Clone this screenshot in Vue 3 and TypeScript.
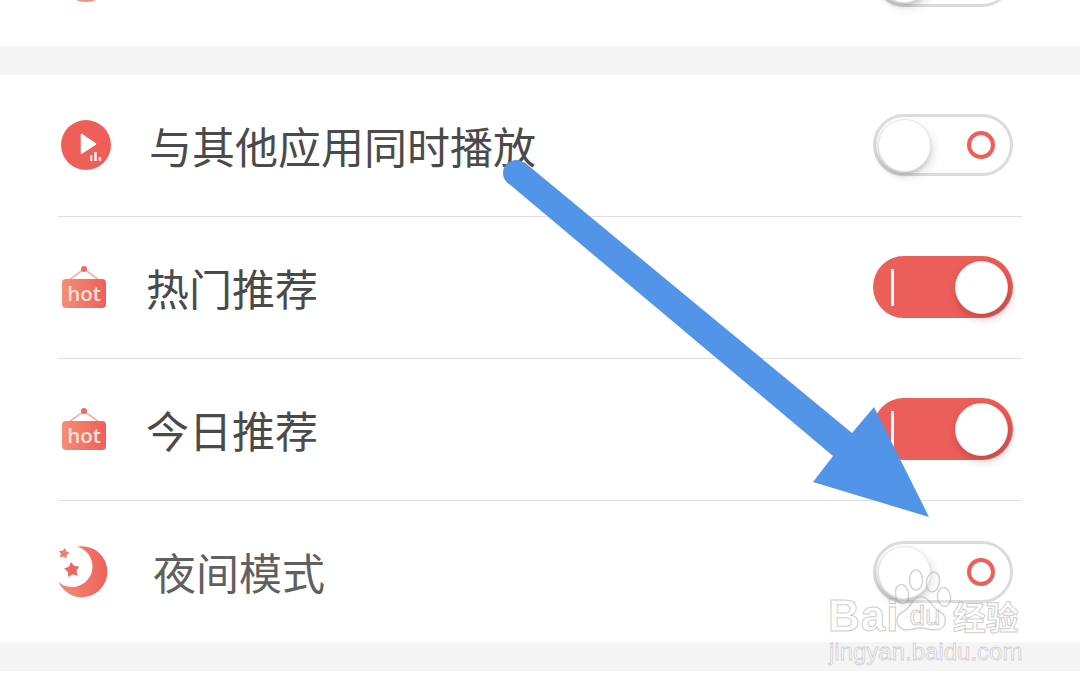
<script setup lang="ts">
function star(cx: number, cy: number, r: number, rot = 0): string {
  const pts: string[] = []
  for (let i = 0; i < 10; i++) {
    const rad = i % 2 === 0 ? r : r * 0.55
    const a = ((-90 + rot + i * 36) * Math.PI) / 180
    pts.push(`${(cx + rad * Math.cos(a)).toFixed(2)},${(cy + rad * Math.sin(a)).toFixed(2)}`)
  }
  return pts.join(' ')
}
const bigStar = star(15, 24, 8, -8)
const smallStar = star(7, 7.5, 5.6, 10)
</script>

<template>
  <div class="page">
    <section class="card card-top">
      <div class="peek-icon"></div>
      <div class="switch off peek-switch"><span class="knob"></span><span class="ring"></span></div>
    </section>
    <div class="band"></div>
    <section class="card">
      <div class="row">
        <svg class="icon play" width="52" height="52" viewBox="0 0 52 52">
          <circle cx="26" cy="26" r="25" fill="#ee5f5a" />
          <path d="M21.5 15.5 L35.5 25 L21.5 34 Z" fill="#fff" stroke="#fff" stroke-width="1.6" stroke-linejoin="round" />
          <rect x="30" y="36" width="2.4" height="6" fill="#fbdcda" />
          <rect x="34.3" y="33" width="2.4" height="9" fill="#fff" />
          <rect x="38.6" y="38" width="2.6" height="4" fill="#fbdcda" />
        </svg>
        <span class="label label-play">与其他应用同时播放</span>
        <div class="switch off"><span class="knob"></span><span class="ring"></span></div>
      </div>
      <div class="row">
        <svg class="icon hot" width="46" height="44" viewBox="0 0 46 44">
          <defs>
            <linearGradient id="hotA" x1="0" x2="1" y1="0" y2="0">
              <stop offset="0" stop-color="#f58d75" />
              <stop offset="1" stop-color="#ee605b" />
            </linearGradient>
          </defs>
          <path d="M8 15 L23 4 L38 15" fill="none" stroke="#f9b0a6" stroke-width="1.6" />
          <circle cx="23" cy="4" r="3" fill="#ef6a63" />
          <rect x="1" y="14" width="44" height="29" rx="4" fill="url(#hotA)" />
          <text x="23" y="35.5" class="hot-text">hot</text>
        </svg>
        <span class="label label-hot">热门推荐</span>
        <div class="switch on"><span class="bar"></span><span class="knob"></span></div>
      </div>
      <div class="row">
        <svg class="icon hot" width="46" height="44" viewBox="0 0 46 44">
          <path d="M8 15 L23 4 L38 15" fill="none" stroke="#f9b0a6" stroke-width="1.6" />
          <circle cx="23" cy="4" r="3" fill="#ef6a63" />
          <rect x="1" y="14" width="44" height="29" rx="4" fill="url(#hotA)" />
          <text x="23" y="35.5" class="hot-text">hot</text>
        </svg>
        <span class="label label-hot">今日推荐</span>
        <div class="switch on"><span class="bar"></span><span class="knob"></span></div>
      </div>
      <div class="row last">
        <svg class="icon moon" width="52" height="52" viewBox="0 0 52 52">
          <defs>
            <linearGradient id="moonA" x1="0" x2="1" y1="0" y2="0">
              <stop offset="0" stop-color="#f58d75" />
              <stop offset="1" stop-color="#ee605b" />
            </linearGradient>
          </defs>
          <path d="M20 0.7 A25.5 25.5 0 1 1 1.5 36 A20.5 20.5 0 1 0 20 0.7 Z" fill="url(#moonA)" />
          <polygon :points="bigStar" fill="#ee655f" />
          <polygon :points="smallStar" fill="#f27d6e" />
        </svg>
        <span class="label label-moon">夜间模式</span>
        <div class="switch off"><span class="knob"></span><span class="ring"></span></div>
      </div>
    </section>
    <div class="band"></div>

    <svg class="arrow" width="1080" height="688" viewBox="0 0 1080 688">
      <circle cx="516" cy="173" r="13" fill="#5295e8" />
      <polygon points="524,162 852,433 874,407 929,517 813,482 833,456 508,183" fill="#5295e8" />
    </svg>

    <div class="watermark">
      <svg class="paw" width="64" height="72" viewBox="0 0 64 72">
        <g fill="rgba(255,255,255,.25)" stroke="rgba(170,170,170,.55)" stroke-width="1.5">
          <ellipse cx="9" cy="33" rx="6.5" ry="9.5" transform="rotate(-10 9 33)" />
          <ellipse cx="23" cy="19" rx="6.5" ry="10" />
          <ellipse cx="40" cy="21" rx="6.5" ry="10" transform="rotate(10 40 21)" />
          <ellipse cx="51" cy="36" rx="6.5" ry="9.5" transform="rotate(-8 51 36)" />
          <path d="M28 36 C37 36 38 46 46 50 C56 55 54 69 42 69 C36 69 33 67 28 67 C22 67 19 69 14 69 C3 69 0 56 11 50 C19 46 19 36 28 36 Z" />
        </g>
      </svg>
      <div class="wm-main">
        <span class="wm-bai">Bai</span>
        <span class="wm-du">du</span>
        <span class="wm-cn">经验</span>
      </div>
      <div class="wm-url">jingyan.baidu.com</div>
    </div>
  </div>
</template>

<style>
html, body { margin: 0; background: #fff; }
</style>

<style scoped>
.page {
  position: relative;
  width: 1080px;
  height: 688px;
  overflow: hidden;
  background: #fff;
  font-family: "Noto Sans CJK SC", "Noto Sans", sans-serif;
}
.card { padding: 0 58px; background: #fff; }
.card-top {
  height: 46px;
  overflow: hidden;
  display: flex;
  justify-content: space-between;
  align-items: flex-end;
  padding-right: 67px;
}
.peek-icon {
  width: 52px;
  height: 52px;
  margin: 0 0 44px 2px;
  border-radius: 50%;
  background: #f58d80;
  flex: none;
}
.peek-switch { margin-bottom: 39px; flex: none; }
.band { height: 29px; background: #f5f5f5; }
.row {
  box-sizing: border-box;
  height: 142px;
  display: flex;
  align-items: center;
  padding-right: 9px;
  border-bottom: 1px solid #dedede;
}
.row.last { border-bottom: none; height: 141px; }
.row.last .switch { margin-top: 1px; }
.icon { flex: none; display: block; }
.icon.play { margin: -1px 0 0 2px; }
.icon.hot { margin: -2px 0 0 3px; }
.icon.moon { margin: 1px 0 0 -1px; }
.hot-text {
  font-family: "Open Sans", sans-serif;
  font-size: 20.5px;
  font-weight: 600;
  fill: #fde3dc;
  text-anchor: middle;
}
.label {
  flex: 1;
  font-size: 43px;
  line-height: 60px;
  margin-top: -1px;
  color: #4a4a4a;
  white-space: nowrap;
}
.label-play { margin-left: 37px; }
.label-hot { margin-left: 39px; }
.label-moon { margin-left: 44px; color: #606060; }

.switch {
  position: relative;
  flex: none;
  box-sizing: border-box;
  width: 140px;
  height: 62px;
  margin-top: -1px;
  border-radius: 31px;
}
.switch.off { background: #fff; border: 3.5px solid #dcdcdc; }
.switch.on { background: #ec5e59; }
.knob {
  position: absolute;
  width: 53px;
  height: 53px;
  border-radius: 50%;
  background: #fff;
  box-sizing: border-box;
}
.off .knob {
  left: 1.5px;
  top: 1.5px;
  border: 1px solid #e6e6e6;
  box-shadow: -1px 3px 4px rgba(0, 0, 0, 0.16), 3px 5px 10px rgba(0, 0, 0, 0.1);
}
.on .knob {
  right: 5px;
  top: 5px;
  border: 1px solid #e8e8e8;
  box-shadow: 2px 4px 8px rgba(110, 30, 30, 0.35);
}
.ring {
  position: absolute;
  right: 15px;
  top: 50%;
  transform: translateY(-50%);
  box-sizing: border-box;
  width: 28px;
  height: 28px;
  border: 4px solid #ee5f5a;
  border-radius: 50%;
}
.bar {
  position: absolute;
  left: 18px;
  top: 13px;
  width: 3px;
  height: 37px;
  background: #fff;
}
.arrow {
  position: absolute;
  left: 0;
  top: 0;
  pointer-events: none;
}
.watermark {
  position: absolute;
  left: 829px;
  top: 548px;
  width: 200px;
  height: 125px;
  pointer-events: none;
  opacity: 0.9;
}
.paw { position: absolute; left: 64px; top: 13px; }
.wm-main {
  position: absolute;
  left: -1px;
  top: 42px;
  height: 52px;
  width: 196px;
  display: flex;
  align-items: center;
  font-family: "Liberation Sans", sans-serif;
  font-weight: 700;
  color: rgba(255, 255, 255, 0.3);
  -webkit-text-stroke: 1px rgba(165, 165, 165, 0.6);
}
.wm-bai { font-size: 44px; letter-spacing: 1px; }
.wm-du { font-size: 28px; margin-left: 10px; font-weight: 400; }
.wm-cn {
  font-family: "Noto Sans CJK SC", sans-serif;
  font-size: 33px;
  margin-left: 12px;
}
.wm-url {
  position: absolute;
  left: 0;
  top: 90px;
  font-family: "Liberation Sans", sans-serif;
  font-size: 24px;
  line-height: 28px;
  white-space: nowrap;
  color: rgba(255, 255, 255, 0.4);
  -webkit-text-stroke: 0.8px rgba(165, 165, 165, 0.55);
}
</style>
